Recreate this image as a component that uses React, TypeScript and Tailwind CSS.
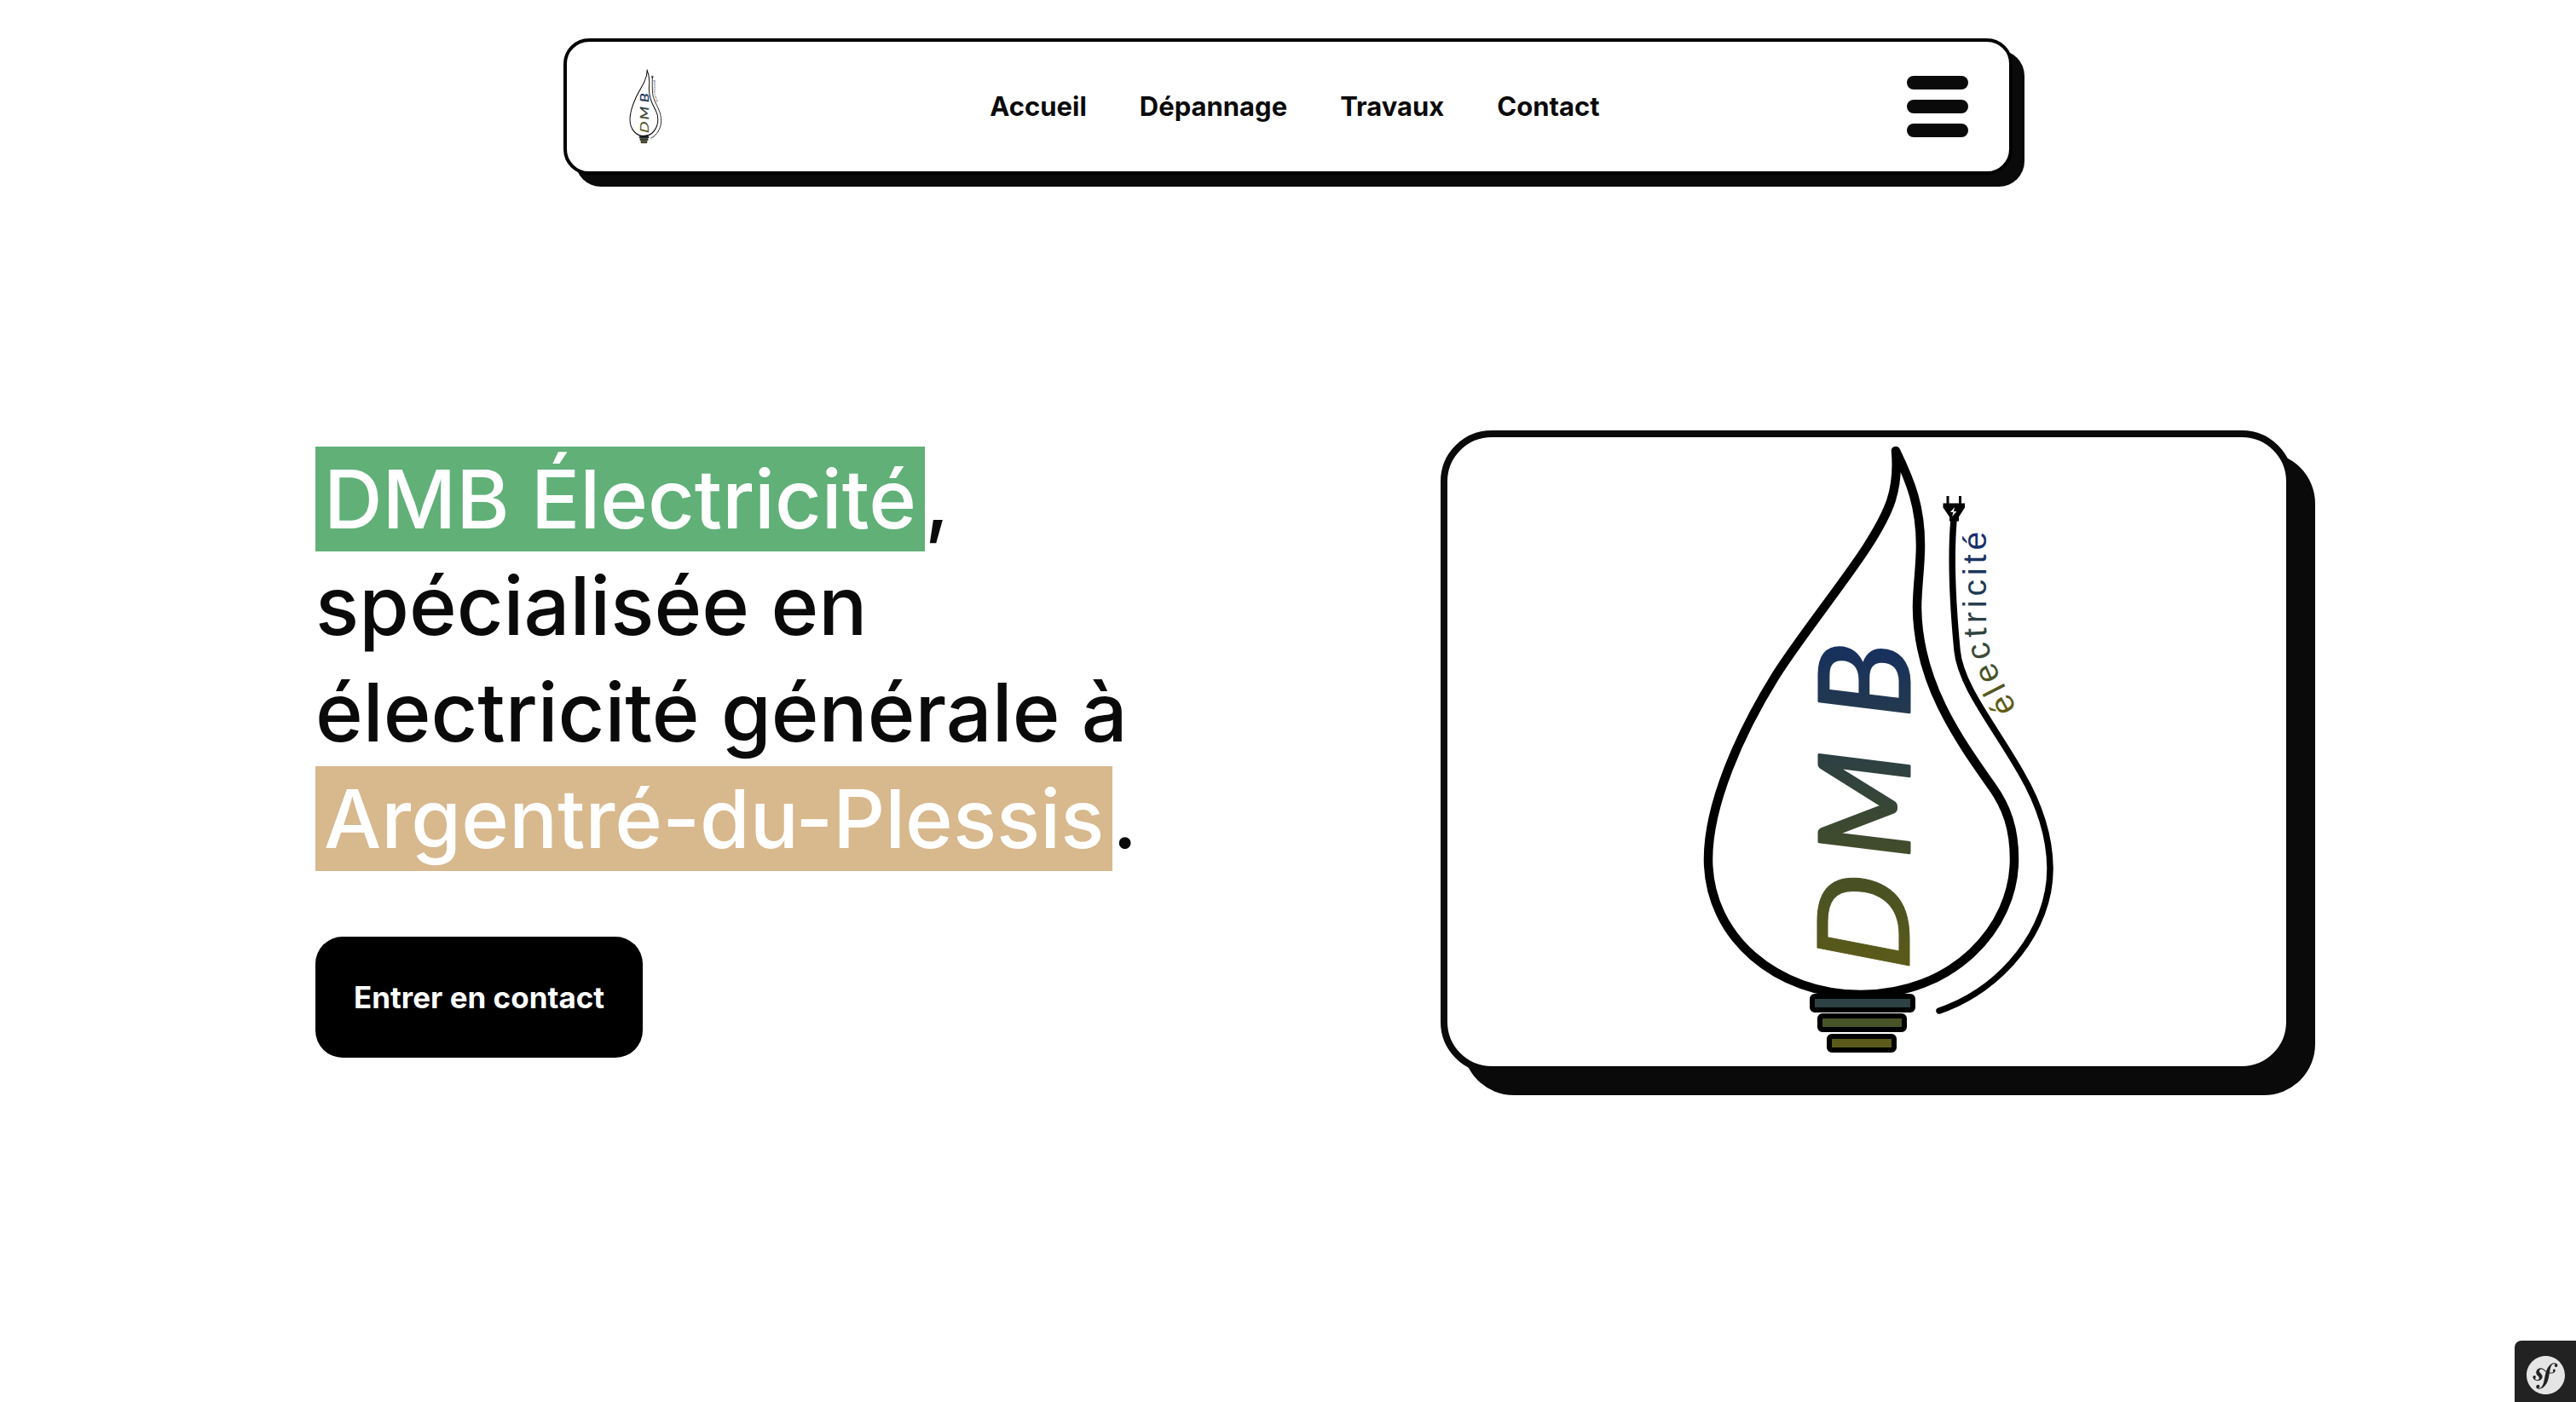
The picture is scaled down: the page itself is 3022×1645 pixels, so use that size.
import { useId } from "react";
import { SiSymfony } from "react-icons/si";

const links = ["Accueil", "Dépannage", "Travaux", "Contact"];

function Logo({ className, stretch = false }: { className: string; stretch?: boolean }) {
  const id = useId();
  const ink = `${id}ink`;
  const small = `${id}small`;
  const curve = `${id}curve`;
  return (
    <svg
      className={className}
      viewBox="0 0 984 738"
      preserveAspectRatio={stretch ? "none" : "xMidYMid meet"}
      role="img"
      aria-label="Logo DMB électricité"
    >
      <defs>
        <linearGradient id={ink} gradientUnits="userSpaceOnUse" x1="0" y1="0" x2="393" y2="0">
          <stop offset="0" stopColor="#5c5b18" />
          <stop offset="0.3" stopColor="#454f26" />
          <stop offset="0.65" stopColor="#2c3f44" />
          <stop offset="1" stopColor="#142e62" />
        </linearGradient>
        <linearGradient id={small} gradientUnits="userSpaceOnUse" x1="0" y1="830" x2="0" y2="630">
          <stop offset="0" stopColor="#5f5d16" />
          <stop offset="0.35" stopColor="#37483a" />
          <stop offset="0.65" stopColor="#213b53" />
          <stop offset="1" stopColor="#142e6a" />
        </linearGradient>
      </defs>
      <g transform="translate(-1698 -513)">
        <g fill="none" stroke="#000" strokeLinecap="round" strokeLinejoin="round">
          <path
            strokeWidth="10.5"
            d="M2224 529C2228 575 2217 600 2190 642C2165 681 2110 750 2083 793C2040 862 2004 945 2004 1008C2004 1100 2085 1167 2183 1167C2290 1167 2363 1090 2363 1008C2363 972 2354 947 2337 923C2296 865 2250 800 2249 713C2249 690 2253 665 2253 640C2253 595 2242 566 2224 529Z"
          />
          <path
            strokeWidth="7.5"
            d="M2292 610C2289 645 2290 700 2296 763C2300 805 2340 852 2371 907C2392 943 2405 980 2405 1020C2405 1090 2350 1160 2275 1186"
          />
        </g>
        <path d="M2283.500 582h3v8.500h11.500v-8.500h3v8.500h4v5l-7 11v5h-11v-5l-7.500-11v-5h4z" />
        <path fill="#fff" d="M2293 595l-5 6h3.500l-1.500 5 5.500-6h-3.500z" />
        <g stroke="#000" strokeWidth="6">
          <rect x="2126" y="1169" width="118" height="16" rx="3" fill="#2e4144" />
          <rect x="2135" y="1192" width="99" height="16" rx="3" fill="#485327" />
          <rect x="2146" y="1216" width="76" height="16" rx="3" fill="#5b5a1b" />
        </g>
        <g transform="translate(2240 1137) rotate(-90)">
          <text
            fill={`url(#${ink})`}
            stroke={`url(#${ink})`}
            strokeLinejoin="round"
            x="0 129 294"
            y="0"
            fontSize="148"
            fontStyle="italic"
            fontFamily="Lato, sans-serif"
          >
            <tspan fontFamily="DejaVu Sans, sans-serif" strokeWidth="1">
              D
            </tspan>
            <tspan strokeWidth="3">MB</tspan>
          </text>
        </g>
        <path id={curve} fill="none" d="M2366 831C2350 800 2330 768 2330 735L2330 590" />
        <text fill={`url(#${small})`} fontSize="39" className="tracking-[5px]" fontFamily="Liberation Sans, Arial, sans-serif">
          <textPath href={`#${curve}`}>électricité</textPath>
        </text>
      </g>
    </svg>
  );
}

export default function App() {
  return (
    <div className="relative flex min-h-screen flex-col bg-white font-[Inter,sans-serif] text-[#0a0a0a]">
      <header className="mx-auto mt-[45px] flex w-full max-w-[1700px] items-center justify-between rounded-[30px] border-4 border-black bg-white py-[31px] pr-12 pl-[46px] shadow-[14px_14px_0_#0a0a0a]">
        <a href="#accueil" className="block">
          <Logo className="size-[90px]" stretch />
        </a>
        <nav className="flex gap-[62px] text-[31px] leading-10 font-bold">
          {links.map((label) => (
            <a key={label} href={`#${label.toLowerCase()}`}>
              {label}
            </a>
          ))}
        </nav>
        <button type="button" aria-label="Menu" className="flex w-[72px] flex-col gap-3">
          <span className="h-4 w-full rounded-full bg-[#0a0a0a]" />
          <span className="h-4 w-full rounded-full bg-[#0a0a0a]" />
          <span className="h-4 w-full rounded-full bg-[#0a0a0a]" />
        </button>
      </header>

      <main className="mx-auto mt-[300px] flex w-full max-w-[2358px] items-center justify-between pl-[38px]">
        <div className="flex flex-col items-start gap-[76px]">
          <h1 className="text-[95px] leading-[125px] font-medium whitespace-nowrap">
            <span className="bg-[#60b078] px-[10px] py-1 text-white">DMB Électricité</span>,<br />
            spécialisée en
            <br />
            électricité générale à
            <br />
            <span className="bg-[#d8b88d] px-[10px] py-1 text-white">Argentré-du-Plessis</span>.
          </h1>
          <a href="#contact" className="rounded-[32px] bg-black px-[45px] py-[49px] text-[35px] leading-11 font-bold text-white">
            Entrer en contact
          </a>
        </div>
        <div className="w-[1000px] rounded-[60px] border-8 border-[#0a0a0a] bg-white shadow-[26px_26px_0_#0a0a0a]">
          <Logo className="block w-full" />
        </div>
      </main>

      <button
        type="button"
        aria-label="Symfony"
        className="fixed right-0 bottom-0 flex size-[72px] items-center justify-center rounded-tl-lg bg-[#222] pt-2 text-[#e5e5e5]"
      >
        <SiSymfony className="size-[45px]" />
      </button>
    </div>
  );
}
